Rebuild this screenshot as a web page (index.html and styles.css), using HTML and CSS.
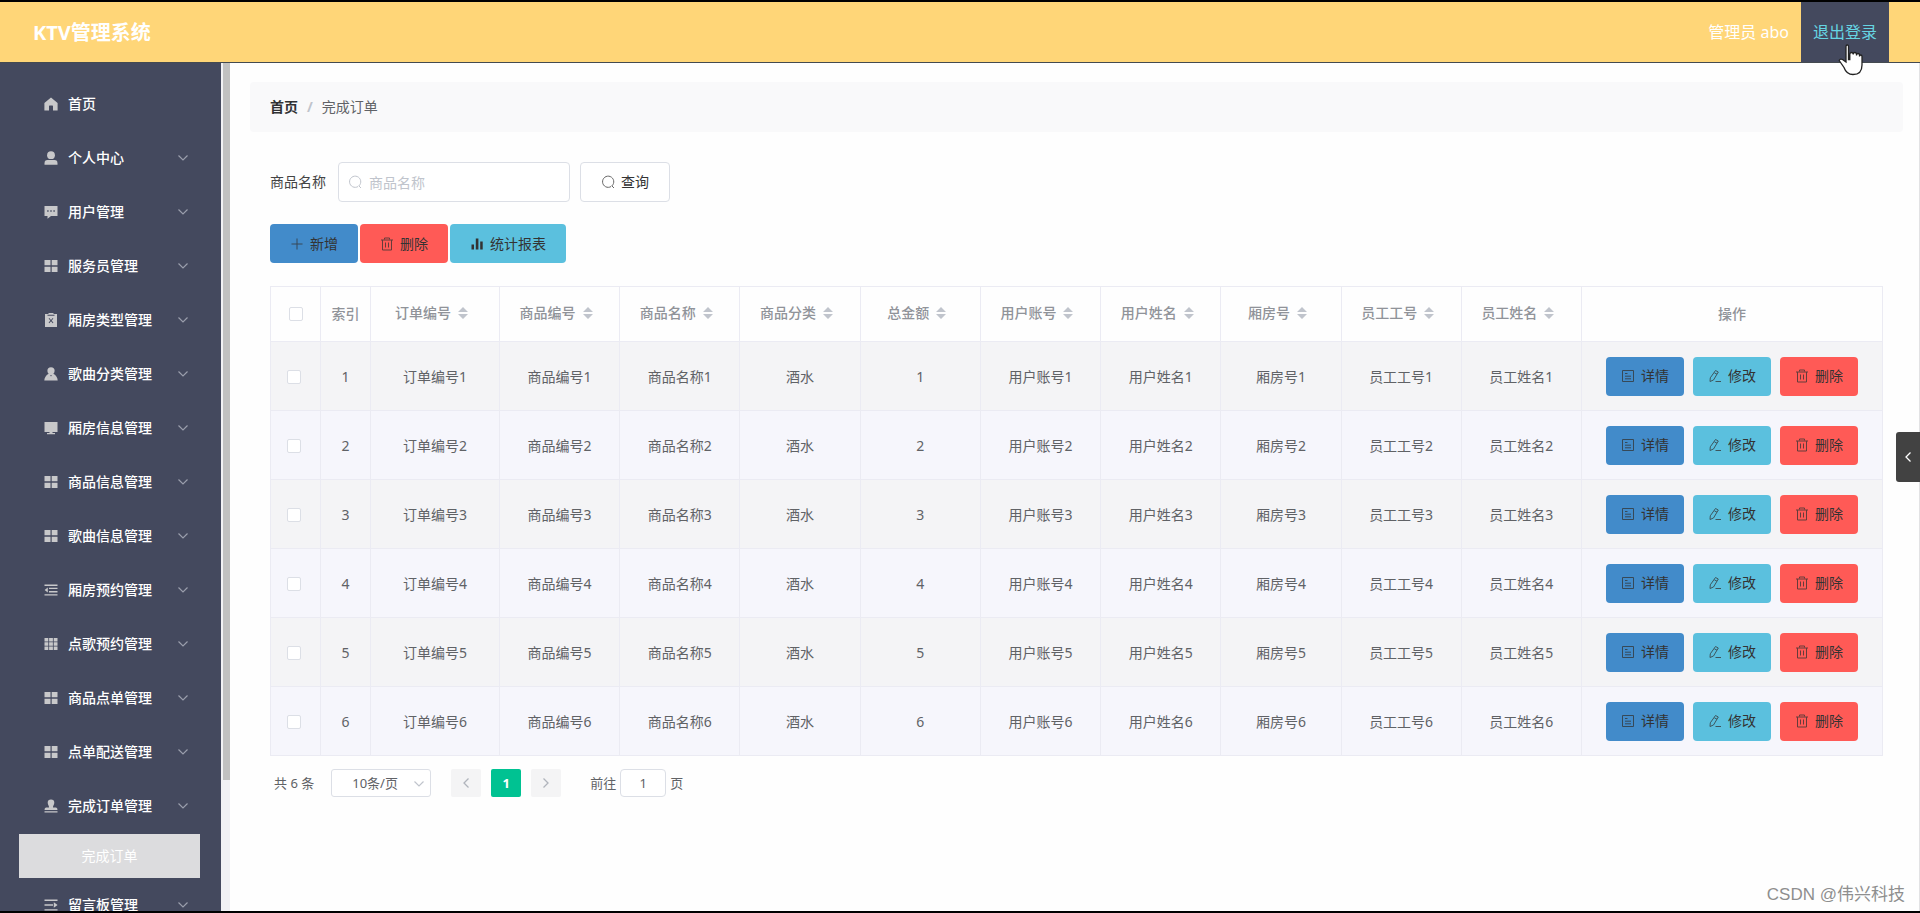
FILE: index.html
```html
<!DOCTYPE html>
<html lang="zh-CN">
<head>
    <meta charset="UTF-8">
    <meta name="viewport" content="width=device-width, initial-scale=1.0">
    <title>KTV管理系统</title>
    <link rel="stylesheet" href="styles.css">
</head>
<body>
<svg class="sprite" xmlns="http://www.w3.org/2000/svg">
    <symbol id="i-home" viewBox="0 0 14 14"><path fill="currentColor" d="M7 .6 13.6 6v7.5H9V9.2a.6.6 0 0 0-.6-.6H5.600a.6.6 0 0 0-.6.6v4.300H.4V6z"/></symbol>
    <symbol id="i-user" viewBox="0 0 14 14"><circle cx="7" cy="4.200" r="3.900" fill="currentColor"/><path fill="currentColor" d="M.5 13.800v-1.600Q.5 9 3.500 9h7q3 0 3 3.200v1.600z"/></symbol>
    <symbol id="i-chat" viewBox="0 0 14 14"><path fill="currentColor" fill-rule="evenodd" d="M.5 1h13v10H7L3.500 13.800V11h-3zM3.200 5.300v1.400h1.400V5.300zm3.100 0v1.400h1.400V5.300zm3.100 0v1.400h1.400V5.300z"/></symbol>
    <symbol id="i-menu" viewBox="0 0 14 14"><path fill="currentColor" d="M.5 1h6v5.300h-6zm7.200 0h5.800v5.300H7.700zM.5 7.700h6V13h-6zm7.200 0h5.800V13H7.700z"/></symbol>
    <symbol id="i-claim" viewBox="0 0 14 14"><path fill="currentColor" fill-rule="evenodd" d="M4.500 0h5v1H13v13H1V1h3.500zM3.500 1.800v1h7v-1zM4.600 5.500 6.300 7.600 4.600 9.700l.7.6L7 8.300l1.700 2 .7-.6-1.700-2.100 1.700-2.100-.7-.6L7 6.900l-1.700-2z"/></symbol>
    <symbol id="i-person" viewBox="0 0 14 14"><circle cx="7" cy="3.800" r="3.600" fill="currentColor"/><path fill="currentColor" fill-rule="evenodd" d="M4.600 6.800h4.800Q13.500 9.200 13.700 13.600H.3Q.5 9.200 4.600 6.800zM7 9.600l1-1.300H6z"/></symbol>
    <symbol id="i-screen" viewBox="0 0 14 14"><path fill="currentColor" d="M.5 1h13v10h-5v1h2.500v1.200H3V12h2.500v-1h-5z"/></symbol>
    <symbol id="i-fold" viewBox="0 0 14 14"><path fill="currentColor" d="M.5 1.500h13v1.400H.5zM5 4.700h8.500v1.400H5zM5 8h8.500v1.400H5zM.5 11.200h13v1.400H.5zM3.800 4.600v4.900L.6 7z"/></symbol>
    <symbol id="i-unfold" viewBox="0 0 14 14"><path fill="currentColor" d="M.5 1.500h13v1.400H.5zM.5 6.300h8.500v1.400H.5zM.5 11.200h13v1.400H.5zM9.800 4.200V9.800L13.600 7z"/></symbol>
    <symbol id="i-grid" viewBox="0 0 14 14"><path fill="currentColor" d="M.5 1h3.800v3.400H.5zm4.600 0h3.800v3.400H5.100zm4.600 0h3.800v3.400H9.700zM.5 5.300h3.800v3.400H.5zm4.600 0h3.800v3.400H5.100zm4.600 0h3.800v3.400H9.700zM.5 9.600h3.800V13H.5zm4.600 0h3.800V13H5.100zm4.600 0h3.800V13H9.700z"/></symbol>
    <symbol id="i-stamp" viewBox="0 0 14 14"><path fill="currentColor" d="M7 .5a3.300 3.300 0 0 1 3.300 3.300C10.300 6 8.800 6.400 9 8.500h3q1.500 0 1.500 2.500H.5q0-2.500 1.500-2.500h3C5.200 6.400 3.700 6 3.700 3.800A3.300 3.300 0 0 1 7 .5zM.5 12.200h13v1.200H.5z"/></symbol>
    <symbol id="i-down" viewBox="0 0 14 14"><path fill="none" stroke="currentColor" stroke-width="1.200" d="m2.500 4.500 4.500 4.500 4.500-4.500"/></symbol>
    <symbol id="i-left" viewBox="0 0 14 14"><path fill="none" stroke="currentColor" stroke-width="1.300" d="M9.500 2.500 5 7l4.500 4.500"/></symbol>
    <symbol id="i-right" viewBox="0 0 14 14"><path fill="none" stroke="currentColor" stroke-width="1.300" d="M4.500 2.500 9 7l-4.500 4.500"/></symbol>
    <symbol id="i-search" viewBox="0 0 14 14"><path fill="none" stroke="currentColor" d="M10.900 10.900a5.600 5.600 0 1 0-.8.600M10.800 10.800 13 13"/></symbol>
    <symbol id="i-plus" viewBox="0 0 14 14"><path fill="none" stroke="currentColor" d="M7 1.500v11M1.500 7h11"/></symbol>
    <symbol id="i-trash" viewBox="0 0 14 14"><path fill="none" stroke="currentColor" d="M1 3h12M2.500 3v10h9V3M4.500 2.500V1h5v1.500M5.500 5.500v5M8.500 5.500v5"/></symbol>
    <symbol id="i-bars" viewBox="0 0 14 14"><path fill="currentColor" d="M1.500 7.500h2.500v5H1.500zM5.800 1.500h2.600v11H5.800zM10.200 4.500h2.500v8h-2.500z"/></symbol>
    <symbol id="i-doc" viewBox="0 0 14 14"><path fill="none" stroke="currentColor" d="M1.500 1.500h11v11h-11zM4 4.500h2.500M4 7.200h6M4 9.800h6"/></symbol>
    <symbol id="i-edit" viewBox="0 0 14 14"><path fill="none" stroke="currentColor" d="M7.500 1.500 10.300 3 5.500 11 2 12.500 2.300 8.800zM6.300 3.800 9 5.200M7.500 12.500h5.500"/></symbol>
    <symbol id="i-sort" viewBox="0 0 10 14"><path fill="currentColor" d="M5 1l5 5H0zM0 8h10l-5 5z"/></symbol>
</svg>

<div class="page">
    <header class="header">
        <h1 class="title">KTV管理系统</h1>
        <span class="admin">管理员 abo</span>
        <button type="button" class="logout">退出登录
            <svg class="cursor" viewBox="0 0 25 32"><path d="M10.500 2.500Q10.500 1 9.200 1 8 1 8 2.500V18L4.500 15.500Q2 14.500 1.200 16.500L6 23.500Q8.500 30.500 15 30.500 24 30.500 24 21V12.500Q24 11 22.700 11 21.500 11 21.500 12.500V11Q21.500 9.500 20 9.500 18.500 9.500 18.500 11.500V10.500Q18.500 8.500 16.800 8.500 15.200 8.500 15.200 10.500V10Q15.200 8.500 13.200 8.500 12 8.500 11.800 10.500V15.500H10.500z" fill="#fff" stroke="#222" stroke-width="1.300"/></svg>
        </button>
    </header>

    <div class="body">
        <nav class="sidebar">
            <a href="#" class="item"><svg class="icon"><use href="#i-home"/></svg><span>首页</span></a>
            <a href="#" class="item"><svg class="icon"><use href="#i-user"/></svg><span>个人中心</span><svg class="arrow"><use href="#i-down"/></svg></a>
            <a href="#" class="item"><svg class="icon"><use href="#i-chat"/></svg><span>用户管理</span><svg class="arrow"><use href="#i-down"/></svg></a>
            <a href="#" class="item"><svg class="icon"><use href="#i-menu"/></svg><span>服务员管理</span><svg class="arrow"><use href="#i-down"/></svg></a>
            <a href="#" class="item"><svg class="icon"><use href="#i-claim"/></svg><span>厢房类型管理</span><svg class="arrow"><use href="#i-down"/></svg></a>
            <a href="#" class="item"><svg class="icon"><use href="#i-person"/></svg><span>歌曲分类管理</span><svg class="arrow"><use href="#i-down"/></svg></a>
            <a href="#" class="item"><svg class="icon"><use href="#i-screen"/></svg><span>厢房信息管理</span><svg class="arrow"><use href="#i-down"/></svg></a>
            <a href="#" class="item"><svg class="icon"><use href="#i-menu"/></svg><span>商品信息管理</span><svg class="arrow"><use href="#i-down"/></svg></a>
            <a href="#" class="item"><svg class="icon"><use href="#i-menu"/></svg><span>歌曲信息管理</span><svg class="arrow"><use href="#i-down"/></svg></a>
            <a href="#" class="item"><svg class="icon"><use href="#i-fold"/></svg><span>厢房预约管理</span><svg class="arrow"><use href="#i-down"/></svg></a>
            <a href="#" class="item"><svg class="icon"><use href="#i-grid"/></svg><span>点歌预约管理</span><svg class="arrow"><use href="#i-down"/></svg></a>
            <a href="#" class="item"><svg class="icon"><use href="#i-menu"/></svg><span>商品点单管理</span><svg class="arrow"><use href="#i-down"/></svg></a>
            <a href="#" class="item"><svg class="icon"><use href="#i-menu"/></svg><span>点单配送管理</span><svg class="arrow"><use href="#i-down"/></svg></a>
            <a href="#" class="item"><svg class="icon"><use href="#i-stamp"/></svg><span>完成订单管理</span><svg class="arrow"><use href="#i-down"/></svg></a>
            <a href="#" class="subitem">完成订单</a>
            <a href="#" class="item"><svg class="icon"><use href="#i-unfold"/></svg><span>留言板管理</span><svg class="arrow"><use href="#i-down"/></svg></a>
        </nav>
        <div class="scrollbar"><div class="thumb"></div></div>

        <main class="main">
            <div class="breadcrumb">
                <a href="#">首页</a><span class="slash">/</span><span>完成订单</span>
            </div>

            <form class="search">
                <label for="goods">商品名称</label>
                <div class="search-box">
                    <svg class="icon"><use href="#i-search"/></svg>
                    <input type="text" id="goods" name="goods" placeholder="商品名称">
                </div>
                <button type="button" class="btn"><svg class="icon"><use href="#i-search"/></svg>查询</button>
            </form>

            <div class="tools">
                <button type="button" class="btn blue"><svg class="icon"><use href="#i-plus"/></svg>新增</button>
                <button type="button" class="btn red"><svg class="icon"><use href="#i-trash"/></svg>删除</button>
                <button type="button" class="btn cyan"><svg class="icon solid"><use href="#i-bars"/></svg>统计报表</button>
            </div>

            <table class="table">
                <colgroup>
                    <col class="col-small"><col class="col-small"><col class="col-order">
                    <col><col><col><col><col><col><col><col><col>
                    <col class="col-action">
                </colgroup>
                <thead>
                    <tr>
                        <th><input type="checkbox" aria-label="全选"></th>
                        <th>索引</th>
                        <th><span class="sort">订单编号<svg><use href="#i-sort"/></svg></span></th>
                        <th><span class="sort">商品编号<svg><use href="#i-sort"/></svg></span></th>
                        <th><span class="sort">商品名称<svg><use href="#i-sort"/></svg></span></th>
                        <th><span class="sort">商品分类<svg><use href="#i-sort"/></svg></span></th>
                        <th><span class="sort">总金额<svg><use href="#i-sort"/></svg></span></th>
                        <th><span class="sort">用户账号<svg><use href="#i-sort"/></svg></span></th>
                        <th><span class="sort">用户姓名<svg><use href="#i-sort"/></svg></span></th>
                        <th><span class="sort">厢房号<svg><use href="#i-sort"/></svg></span></th>
                        <th><span class="sort">员工工号<svg><use href="#i-sort"/></svg></span></th>
                        <th><span class="sort">员工姓名<svg><use href="#i-sort"/></svg></span></th>
                        <th>操作</th>
                    </tr>
                </thead>
                <tbody id="rows"></tbody>
            </table>

            <div class="pagination">
                <span>共 6 条</span>
                <div class="page-size">
                    <select aria-label="每页条数"><option>10条/页</option></select>
                    <svg class="arrow"><use href="#i-down"/></svg>
                </div>
                <div class="pager">
                    <button type="button" aria-label="上一页" disabled><svg class="icon"><use href="#i-left"/></svg></button>
                    <button type="button" class="active">1</button>
                    <button type="button" aria-label="下一页" disabled><svg class="icon"><use href="#i-right"/></svg></button>
                </div>
                <div class="jump">
                    <label for="jump">前往</label>
                    <input type="text" id="jump" value="1">
                    <span>页</span>
                </div>
            </div>
        </main>
    </div>

    <button type="button" class="drawer" aria-label="展开"><svg class="icon"><use href="#i-left"/></svg></button>
    <div class="watermark">CSDN @伟兴科技</div>
</div>

<script src="script.js"></script>
</body>
</html>
```
FILE: styles.css
```css
* {
    box-sizing: border-box;
}
body {
    margin: 0;
    font-family: "Noto Sans", "Noto Sans CJK SC", sans-serif;
    font-size: 14px;
    line-height: 20px;
    color: #606266;
    background-color: #fefefe;
}
button, input, select {
    font: inherit;
    color: inherit;
}
button {
    cursor: pointer;
}
a {
    color: inherit;
    text-decoration: none;
}
.sprite {
    display: none;
}
.icon, .arrow {
    width: 14px;
    height: 14px;
    flex: none;
}
.page {
    position: relative;
    display: flex;
    flex-direction: column;
    height: 100vh;
    overflow: hidden;
    border-top: 2px solid #000;
    border-bottom: 2px solid #000;
}

/* header */
.header {
    display: flex;
    align-items: center;
    flex: none;
    height: 61px;
    padding: 0 31px 0 33px;
    background-color: #ffd678;
    border-bottom: 1px solid #444a50;
    color: #fff;
    font-size: 16px;
}
.title {
    flex: 1;
    margin: 0;
    padding-top: 2px;
    font-size: 20px;
    line-height: 28px;
}
.logout {
    position: relative;
    align-self: stretch;
    width: 88px;
    margin-left: 12px;
    padding: 0;
    border: none;
    background-color: #44495e;
    color: #66d5e3;
}
.cursor {
    position: absolute;
    left: 37px;
    top: 42px;
    width: 25px;
    height: 32px;
    z-index: 2;
}

/* sidebar */
.body {
    display: flex;
    flex: 1;
    min-height: 0;
}
.sidebar {
    flex: none;
    width: 221px;
    padding-top: 14px;
    overflow: hidden;
    background-color: #44495e;
}
.item {
    display: flex;
    align-items: center;
    gap: 10px;
    height: 54px;
    padding: 0 31px 0 44px;
    color: #fff;
    font-weight: 500;
}
.item .icon {
    color: #c8c8ca;
}
.item .arrow {
    margin-left: auto;
    color: #9a9eac;
}
.subitem {
    display: block;
    height: 44px;
    margin: 1px 21px 0 19px;
    line-height: 44px;
    text-align: center;
    color: #fff;
    background-color: #dcdcde;
}
.scrollbar {
    flex: none;
    width: 9px;
    padding-left: 2px;
    background-color: #f1f1f4;
}
.thumb {
    height: 84.5%;
    background-color: #c1c1c1;
}

/* content */
.main {
    flex: 1;
    min-width: 0;
    padding: 19px 16px 0 20px;
    border-right: 1px solid #e2e2e4;
}
.breadcrumb {
    display: flex;
    align-items: center;
    height: 50px;
    padding: 0 20px;
    border-radius: 4px;
    background-color: #f9f9fa;
}
.breadcrumb a {
    color: #303133;
    font-weight: 700;
}
.slash {
    margin: 0 9px;
    color: #c0c4cc;
    font-weight: 700;
}
.search {
    display: flex;
    align-items: center;
    margin: 30px 20px 0;
    color: #444;
}
.search-box {
    position: relative;
    width: 232px;
    margin: 0 10px 0 12px;
}
.search-box .icon {
    position: absolute;
    left: 10px;
    top: 13px;
    color: #c0c4cc;
}
.search-box input {
    display: block;
    width: 100%;
    height: 40px;
    padding: 0 15px 0 30px;
    border: 1px solid #dcdfe6;
    border-radius: 4px;
    background-color: #fff;
}
.search-box input::placeholder {
    color: #c0c4cc;
}
.btn {
    display: flex;
    align-items: center;
    gap: 6px;
    height: 40px;
    padding: 0 20px;
    border: 1px solid #dcdfe6;
    border-radius: 4px;
    background-color: #fff;
    color: #333;
}
.btn .icon {
    opacity: 0.75;
}
.btn .solid {
    opacity: 1;
}
.blue, .red, .cyan {
    height: 39px;
    border: none;
}
.blue {
    background-color: #428bca;
}
.red {
    background-color: #ff5a56;
}
.cyan {
    background-color: #5bc0de;
}
.tools {
    display: flex;
    gap: 2px;
    margin: 22px 20px 0;
}

/* table */
.table {
    width: calc(100% - 40px);
    margin: 23px 20px 0;
    table-layout: fixed;
    border-collapse: collapse;
    text-align: center;
}
.col-small {
    width: 50px;
}
.col-order {
    width: 129px;
}
.col-action {
    width: 301px;
}
.table th, .table td {
    padding: 0;
    border: 1px solid #ebebf3;
}
.table th {
    height: 55px;
    color: #909399;
    font-weight: 500;
}
.table td {
    height: 69px;
    padding-top: 2px;
}
.table td:last-child {
    padding-top: 0;
}
.table tbody tr {
    background-color: #f6f6fc;
}
.table tbody tr:nth-child(odd) {
    background-color: #f4f4f6;
}
.sort {
    display: inline-flex;
    align-items: center;
    padding-bottom: 3px;
}
.sort svg {
    width: 10px;
    height: 14px;
    margin: 0 7px;
    color: #c0c4cc;
}
input[type="checkbox"] {
    appearance: none;
    display: block;
    width: 14px;
    height: 14px;
    margin: 0 auto;
    border: 1px solid #dcdfe6;
    border-radius: 2px;
    background-color: #fff;
}
td input[type="checkbox"] {
    margin-left: 16px;
}
.actions {
    display: flex;
    justify-content: center;
    gap: 9px;
}
.actions .btn {
    padding: 0 15px;
}

/* pagination */
.pagination {
    display: flex;
    align-items: center;
    margin: 13px 24px 0;
    font-size: 13px;
}
.page-size {
    position: relative;
    margin: 0 20px 0 17px;
}
.page-size select {
    appearance: none;
    display: block;
    width: 100px;
    height: 28px;
    padding: 0 22px 0 20px;
    border: 1px solid #dcdfe6;
    border-radius: 3px;
    background-color: #fff;
}
.page-size .arrow {
    position: absolute;
    right: 5px;
    top: 8px;
    color: #c0c4cc;
    pointer-events: none;
}
.pager {
    display: flex;
    gap: 10px;
}
.pager button {
    display: flex;
    align-items: center;
    justify-content: center;
    width: 30px;
    height: 28px;
    padding: 0;
    border: none;
    border-radius: 2px;
    background-color: #f4f4f5;
    color: #b0b4bc;
}
.pager .active {
    background-color: #00c292;
    color: #fff;
    font-weight: 700;
}
.jump {
    display: flex;
    align-items: center;
    gap: 4px;
    margin-left: 29px;
}
.jump input {
    width: 46px;
    height: 28px;
    padding: 0;
    border: 1px solid #dcdfe6;
    border-radius: 4px;
    background-color: #fff;
    text-align: center;
}

/* floating */
.drawer {
    position: absolute;
    right: 0;
    top: 430px;
    display: flex;
    align-items: center;
    justify-content: center;
    width: 24px;
    height: 50px;
    padding: 0;
    border: none;
    border-radius: 3px 0 0 3px;
    background-color: #424242;
    color: #fff;
}
.watermark {
    position: absolute;
    right: 15px;
    bottom: 4px;
    font-family: "Liberation Sans", "Noto Sans CJK SC", sans-serif;
    font-size: 17px;
    line-height: 24px;
    color: #8e8e8e;
}
```
FILE: script.js
```js
const rows = document.getElementById('rows');
const action = (color, icon, text) =>
    `<button type="button" class="btn ${color}"><svg class="icon"><use href="#i-${icon}"/></svg>${text}</button>`;

for (let i = 1; i <= 6; i++) {
    const cells = [i, '订单编号' + i, '商品编号' + i, '商品名称' + i, '酒水', i,
        '用户账号' + i, '用户姓名' + i, '厢房号' + i, '员工工号' + i, '员工姓名' + i];
    rows.innerHTML += `<tr>
        <td><input type="checkbox" aria-label="选择第${i}行"></td>
        ${cells.map(c => `<td>${c}</td>`).join('')}
        <td><div class="actions">
            ${action('blue', 'doc', '详情')}${action('cyan', 'edit', '修改')}${action('red', 'trash', '删除')}
        </div></td>
    </tr>`;
}
```
